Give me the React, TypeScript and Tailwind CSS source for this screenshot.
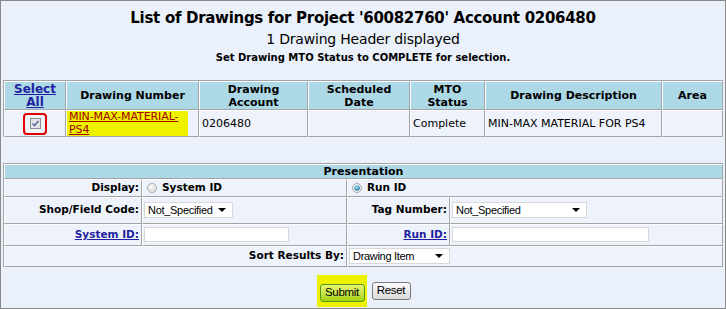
import React from 'react';

const font = { fontFamily: '"DejaVu Sans", Verdana, sans-serif' };
const sysFont = { fontFamily: '"Liberation Sans", Arial, sans-serif' };

const Caret: React.FC = () => (
  <svg width="8" height="4" viewBox="0 0 8 4" className="shrink-0">
    <path d="M0 0h8L4 4z" fill="#000" />
  </svg>
);

const FakeSelect: React.FC<{ value: string; width: string }> = ({ value, width }) => (
  <div
    className={`${width} h-[16px] bg-white border border-[#d8d8d8] flex items-center justify-between pl-[3px] pr-[6px] text-[11px] text-black leading-none`}
    style={sysFont}
  >
    <span className="tracking-[-0.3px]">{value}</span>
    <Caret />
  </div>
);

const Radio: React.FC<{ checked?: boolean }> = ({ checked }) => (
  <svg width="10" height="10" viewBox="0 0 10 10" className="shrink-0">
    <defs>
      <radialGradient id={checked ? 'rOn' : 'rOff'} cx="40%" cy="35%" r="70%">
        <stop offset="0%" stopColor={checked ? '#a8e8ff' : '#ffffff'} />
        <stop offset="100%" stopColor={checked ? '#1a6aa0' : '#d2d2d2'} />
      </radialGradient>
    </defs>
    <circle cx="5" cy="5" r="4.5" fill="#f2f2f2" stroke="#a8a8a8" strokeWidth="1" />
    {checked ? (
      <circle cx="5" cy="5" r="2.8" fill="url(#rOn)" />
    ) : (
      <circle cx="5" cy="5" r="3.3" fill="url(#rOff)" />
    )}
  </svg>
);

// outset cell look: light top/left, grey bottom/right
const edge = 'border-t border-l border-b border-r border-t-[#fbfcff] border-l-[#fbfcff] border-b-[#a4a4a4] border-r-[#a4a4a4]';
const th = `${edge} bg-[#add8e6] font-bold text-[11px] text-black text-center leading-[13px] p-0`;
const td = `${edge} bg-[#eef3fb] text-[11px] text-black leading-[12px] px-[2px]`;
const lbl = `${edge} bg-[#eef3fb] text-right font-bold text-[10.5px] text-black pr-[2px]`;
const cell = `${edge} bg-[#eef3fb] pl-[1px]`;

const App: React.FC = () => {
  return (
    <div className="w-[726px] h-[309px] border border-[#8a8a8a] bg-[#eaf1fb] flex flex-col overflow-hidden" style={font}>
      <div className="flex flex-col items-center pt-[8px]">
        <div className="text-[15px] font-bold text-black leading-[18px] tracking-[-0.3px]">
          List of Drawings for Project '60082760' Account 0206480
        </div>
        <div className="text-[14px] text-black leading-[20px] mt-[2px] tracking-[-0.2px]">1 Drawing Header displayed</div>
        <div className="text-[10px] font-bold text-black leading-[14px] mt-[2px]">
          Set Drawing MTO Status to COMPLETE for selection.
        </div>
      </div>

      <div className="px-[2px] mt-[15px]">
        <table className="w-[719px] border-separate border-spacing-0 table-fixed border-t border-l border-[#a4a4a4]">
          <colgroup>
            <col className="w-[62px]" />
            <col className="w-[133px]" />
            <col className="w-[109px]" />
            <col className="w-[102px]" />
            <col className="w-[75px]" />
            <col className="w-[177px]" />
            <col className="w-[61px]" />
          </colgroup>
          <thead>
            <tr className="h-[29px]">
              <th className={th}>
                <a href="#" className="text-[#1f1fa0] underline text-[12px]">
                  Select
                  <br />
                  All
                </a>
              </th>
              <th className={th}>Drawing Number</th>
              <th className={th}>
                Drawing
                <br />
                Account
              </th>
              <th className={th}>
                Scheduled
                <br />
                Date
              </th>
              <th className={th}>
                MTO
                <br />
                Status
              </th>
              <th className={th}>Drawing Description</th>
              <th className={th}>Area</th>
            </tr>
          </thead>
          <tbody>
            <tr className="h-[27px]">
              <td className={`${td} text-center`}>
                <div className="inline-flex items-center justify-center w-[24px] h-[22px] border-2 border-[#e00000] rounded-[4px] align-middle">
                  <svg width="11" height="11" viewBox="0 0 11 11">
                    <rect x="0.5" y="0.5" width="10" height="10" fill="#e4e4e4" stroke="#8e8e8e" />
                    <path d="M2.5 5.5l2 2 4-4.5" fill="none" stroke="#5a6fa8" strokeWidth="1.6" />
                  </svg>
                </div>
              </td>
              <td className={`${edge} bg-[#eef3fb] p-0`}>
                <div className="bg-[#eef200] h-[25px] w-[121px] flex items-center pl-[2px]">
                  <a href="#" className="text-[#a00000] underline text-[11px] leading-[12.5px] tracking-[-0.1px]">
                    MIN-MAX-MATERIAL-
                    <br />
                    PS4
                  </a>
                </div>
              </td>
              <td className={td}>0206480</td>
              <td className={td}></td>
              <td className={td}>Complete</td>
              <td className={td}>MIN-MAX MATERIAL FOR PS4</td>
              <td className={td}></td>
            </tr>
          </tbody>
        </table>
      </div>

      <div className="px-[2px] mt-[26px]">
        <table className="w-[719px] border-separate border-spacing-0 table-fixed border-t border-l border-[#a4a4a4]">
          <colgroup>
            <col className="w-[138px]" />
            <col className="w-[205px]" />
            <col className="w-[103px]" />
            <col className="w-[273px]" />
          </colgroup>
          <tbody>
            <tr className="h-[15px]">
              <th colSpan={4} className={th}>Presentation</th>
            </tr>
            <tr className="h-[17px]">
              <td className={lbl}>Display:</td>
              <td className={cell}>
                <div className="flex items-center gap-[5px] pl-[3px] font-bold text-[10.5px]">
                  <Radio />
                  System ID
                </div>
              </td>
              <td colSpan={2} className={cell}>
                <div className="flex items-center gap-[5px] pl-[3px] font-bold text-[10.5px]">
                  <Radio checked />
                  Run ID
                </div>
              </td>
            </tr>
            <tr className="h-[27px]">
              <td className={lbl}>Shop/Field Code:</td>
              <td className={cell}>
                <FakeSelect value="Not_Specified" width="w-[89px]" />
              </td>
              <td className={lbl}>Tag Number:</td>
              <td className={cell}>
                <FakeSelect value="Not_Specified" width="w-[135px]" />
              </td>
            </tr>
            <tr className="h-[22px]">
              <td className={lbl}>
                <a href="#" className="text-[#1f1fa0] underline">System ID:</a>
              </td>
              <td className={cell}>
                <div className="w-[145px] h-[15px] bg-white border border-[#d8d8d8]" />
              </td>
              <td className={lbl}>
                <a href="#" className="text-[#1f1fa0] underline">Run ID:</a>
              </td>
              <td className={cell}>
                <div className="w-[197px] h-[15px] bg-white border border-[#d8d8d8]" />
              </td>
            </tr>
            <tr className="h-[21px]">
              <td colSpan={2} className={lbl}>Sort Results By:</td>
              <td colSpan={2} className={cell}>
                <FakeSelect value="Drawing Item" width="w-[101px]" />
              </td>
            </tr>
          </tbody>
        </table>
      </div>

      <div className="flex justify-center items-center gap-[5px] mt-[8px] pl-[1px]" style={sysFont}>
        <div className="bg-[#eef200] pt-[4px] pb-[4px] pl-[3px] pr-[2px]">
          <button className="h-[18px] w-[45px] text-[11.5px] leading-none text-black tracking-[-0.3px] rounded-[3px] border border-[#4f9a1c] bg-gradient-to-b from-[#e8f66e] to-[#a6d200]">
            Submit
          </button>
        </div>
        <button className="h-[18px] w-[39px] text-[11.5px] leading-none text-black tracking-[-0.3px] rounded-[3px] border border-[#7a7a7a] bg-gradient-to-b from-[#fbfbfb] to-[#dadada]">
          Reset
        </button>
      </div>
    </div>
  );
};

export default App;
